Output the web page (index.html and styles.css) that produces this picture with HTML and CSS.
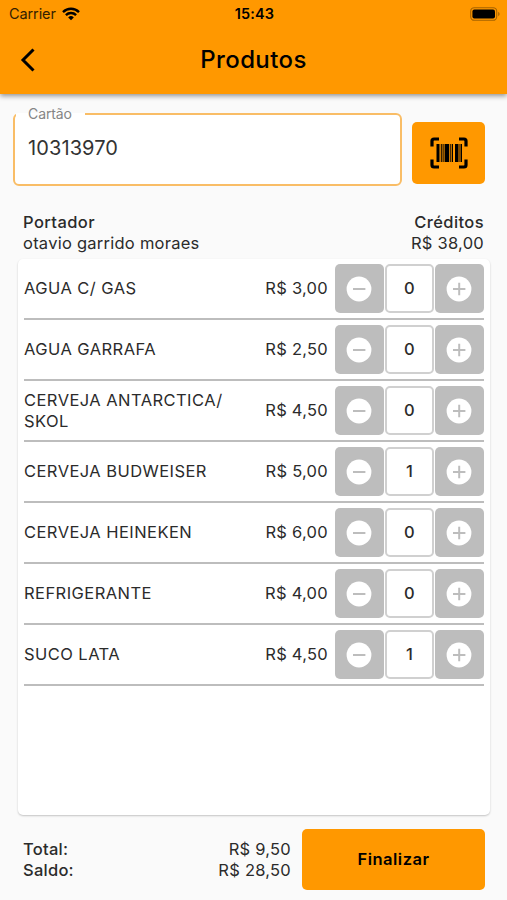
FILE: index.html
```html
<!DOCTYPE html>
<html lang="pt-BR">
<head>
<meta charset="utf-8">
<title>Produtos</title>
<link rel="stylesheet" href="styles.css">
</head>
<body>
<svg class="defs" width="0" height="0">
  <symbol id="minus" viewBox="0 0 26 26"><circle cx="13" cy="13" r="12.4" fill="#fff"/><path d="M7 13h12.4" stroke="#bdbdbd" stroke-width="2"/></symbol>
  <symbol id="plus" viewBox="0 0 26 26"><circle cx="13" cy="13" r="12.4" fill="#fff"/><path d="M7 13h12.4M13.2 6.8v12.4" stroke="#bdbdbd" stroke-width="2"/></symbol>
</svg>
<header class="top">
  <div class="status">
    <div class="carrier"><span>Carrier</span>
      <svg width="18" height="14" viewBox="0 0 18 14" fill="none" stroke="#000" stroke-width="2.4"><path d="M1 5.1a11.4 11.4 0 0 1 16 0M3.9 8.1a7.2 7.2 0 0 1 10.2 0"/><path d="M9 13.3 6.2 10.4a4 4 0 0 1 5.6 0z" fill="#000" stroke="none"/></svg>
    </div>
    <div class="clock">15:43</div>
    <svg class="battery" width="30" height="14" viewBox="0 0 30 14"><rect x=".7" y=".7" width="26" height="12.6" rx="3.6" fill="none" stroke="#a66300" stroke-width="1.1"/><rect x="2.4" y="2.4" width="22.6" height="9.2" rx="2" fill="#000"/><path d="M28.2 4.8q1.4.7 1.4 2.2t-1.4 2.2z" fill="#a66300"/></svg>
  </div>
  <div class="bar">
    <svg width="16" height="24" viewBox="0 0 16 24" fill="none" stroke="#000" stroke-width="3"><path d="M13.5 1.5 3 12l10.5 10.5"/></svg>
    <h1>Produtos</h1>
  </div>
</header>
<main>
  <div class="search">
    <fieldset class="field"><legend>Cartão</legend><div>10313970</div></fieldset>
    <button class="scan">
      <svg width="38" height="32" viewBox="0 0 38 32"><path d="M2 9.500V4q0-2 2-2h5M29 2h5q2 0 2 2v5.500M36 22.500V28q0 2-2 2h-5M9 30H4q-2 0-2-2v-5.500" fill="none" stroke="#000" stroke-width="3.2"/><path d="M6.500 7h3v18h-3zM10.800 7h1v18h-1zM12.600 7h1v18h-1zM14.600 7h4.600v18h-4.600zM20.300 7h1v18h-1zM22 7h1v18h-1zM25 7h3.500v18H25zM29.500 7h1v18h-1zM31 7h1v18h-1z"/></svg>
    </button>
  </div>
  <div class="holder">
    <div><b>Portador</b><span>otavio garrido moraes</span></div>
    <div class="right"><b>Créditos</b><span>R$ 38,00</span></div>
  </div>
  <section class="card">
    <div class="row"><span class="name">AGUA C/ GAS</span><span class="price">R$ 3,00</span><div class="qty"><button><svg><use href="#minus"/></svg></button><output>0</output><button><svg><use href="#plus"/></svg></button></div></div>
    <div class="row"><span class="name">AGUA GARRAFA</span><span class="price">R$ 2,50</span><div class="qty"><button><svg><use href="#minus"/></svg></button><output>0</output><button><svg><use href="#plus"/></svg></button></div></div>
    <div class="row"><span class="name">CERVEJA ANTARCTICA/<br>SKOL</span><span class="price">R$ 4,50</span><div class="qty"><button><svg><use href="#minus"/></svg></button><output>0</output><button><svg><use href="#plus"/></svg></button></div></div>
    <div class="row"><span class="name">CERVEJA BUDWEISER</span><span class="price">R$ 5,00</span><div class="qty"><button><svg><use href="#minus"/></svg></button><output>1</output><button><svg><use href="#plus"/></svg></button></div></div>
    <div class="row"><span class="name">CERVEJA HEINEKEN</span><span class="price">R$ 6,00</span><div class="qty"><button><svg><use href="#minus"/></svg></button><output>0</output><button><svg><use href="#plus"/></svg></button></div></div>
    <div class="row"><span class="name">REFRIGERANTE</span><span class="price">R$ 4,00</span><div class="qty"><button><svg><use href="#minus"/></svg></button><output>0</output><button><svg><use href="#plus"/></svg></button></div></div>
    <div class="row"><span class="name">SUCO LATA</span><span class="price">R$ 4,50</span><div class="qty"><button><svg><use href="#minus"/></svg></button><output>1</output><button><svg><use href="#plus"/></svg></button></div></div>
  </section>
</main>
<footer>
  <dl><dt>Total:</dt><dd>R$ 9,50</dd><dt>Saldo:</dt><dd>R$ 28,50</dd></dl>
  <button class="finish">Finalizar</button>
</footer>
</body>
</html>
```
FILE: styles.css
```css
* { box-sizing: border-box; }
body {
  margin: 0;
  height: 900px;
  overflow: hidden;
  display: flex;
  flex-direction: column;
  background: #fafafa;
  color: #2b2b2b;
  font: 400 16.5px/21px Inter, "Liberation Sans", sans-serif;
  letter-spacing: .25px;
}
.defs { display: none; }
button { border: 0; padding: 0; font: inherit; letter-spacing: inherit; display: flex; align-items: center; justify-content: center; }
.top {
  height: 94px;
  flex: none;
  background: #ff9800;
  color: #000;
  box-shadow: 0 2px 5px rgba(0, 0, 0, .42);
}
.status { height: 27px; display: grid; grid-template-columns: 1fr auto 1fr; align-items: center; padding: 0 7px 0 9px; font-size: 14.5px; letter-spacing: .1px; }
.carrier { display: flex; align-items: center; gap: 6px; color: #332000; letter-spacing: -.1px; }
.clock { font-weight: 600; }
.battery { justify-self: end; }
.bar { height: 66px; display: grid; grid-template-columns: 32px 1fr 32px; align-items: center; padding: 0 20px; }
h1 { margin: 0; font-size: 24px; line-height: 30px; font-weight: 500; letter-spacing: .4px; text-align: center; }
main { flex: 1; display: flex; flex-direction: column; }
.search { display: flex; align-items: flex-start; gap: 10px; padding: 12px 22px 0 13px; }
.field { width: 389px; height: 80px; margin: 0; padding: 0; border: 2px solid #f9bd66; border-radius: 6px; background: #fff; min-width: 0; font-size: 20px; letter-spacing: .1px; color: #333; }
.field legend { margin-left: 1px; padding: 0 13px 0 12px; font-size: 14px; line-height: 15px; letter-spacing: -.1px; color: #858585; }
.field div { padding: 15px 0 0 13px; line-height: 24px; }
.scan { width: 73px; height: 62px; margin-top: 16px; border-radius: 5px; background: #ff9800; }
.holder { display: flex; justify-content: space-between; padding: 26px 23px 0; height: 73px; }
.holder > div { display: flex; flex-direction: column; }
.right { text-align: right; }
b { font-weight: 500; letter-spacing: .4px; }
.card { flex: 1; margin: 0 17px 0 18px; padding: 0 6px; background: #fff; border-radius: 5px; box-shadow: 0 1px 2px rgba(0, 0, 0, .22); }
.row { height: 61px; display: flex; align-items: center; border-bottom: 2px solid #bdbdbd; }
.name { flex: 1; white-space: nowrap; letter-spacing: .44px; }
.price { margin-right: 7px; }
.qty { display: flex; gap: 1.5px; }
.qty button, .qty output { width: 48.7px; height: 49px; border-radius: 5px; }
.qty button { background: #bdbdbd; }
.qty svg { width: 26px; height: 26px; margin-right: 1px; }
.qty output { display: flex; align-items: center; justify-content: center; border: 2px solid #d0d0d0; font-weight: 500; }
footer { flex: none; height: 85px; display: flex; gap: 11px; padding: 14px 22px 0 23px; }
dl { flex: 1; margin: 10px 0 0; display: grid; grid-template-columns: 1fr auto; align-content: start; }
dt { font-weight: 500; }
dd { margin: 0; text-align: right; }
.finish { width: 183px; height: 61px; border-radius: 5px; background: #ff9800; color: #000; font-weight: 600; letter-spacing: .5px; }
```
